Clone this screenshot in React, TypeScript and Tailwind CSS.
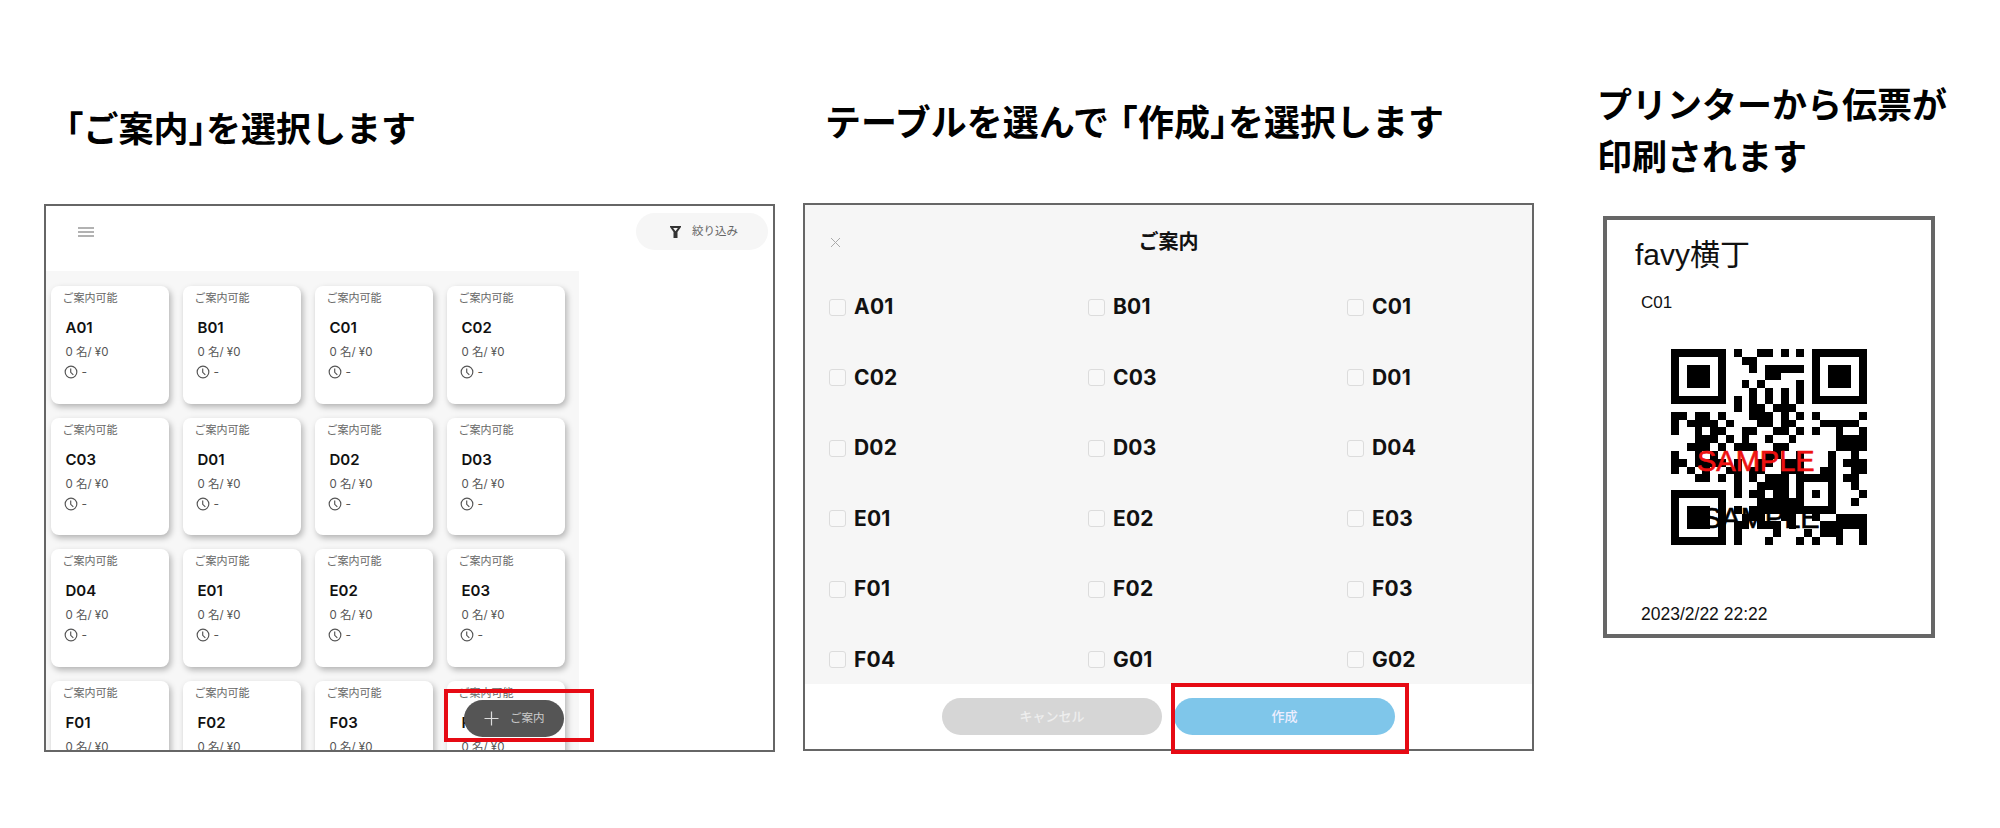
import React from "react";

const QR = [
  "1111111010011010101111111",
  "1000001001100000001000001",
  "1011101000101111101011101",
  "1011101000001100001011101",
  "1011101001010000101011101",
  "1000001000101010101000001",
  "1111111010101010101111111",
  "0000000010110111000000000",
  "1101101000111010101000001",
  "1011110100011011000111110",
  "1001011001100110101001001",
  "0001110101001001000001111",
  "0011101011100110000001111",
  "1001010000001100100010010",
  "1101111010011011100010111",
  "1010100110110011100110011",
  "0001101010101110111110110",
  "0000000010011110100010010",
  "1111111010110110101010001",
  "1000001000011111100010010",
  "1011101010111111111110000",
  "1011101001110011001001111",
  "1011101011011101000111111",
  "1000001010000100010111001",
  "1111111010001000101001001",
];

const cards = [
  "A01", "B01", "C01", "C02",
  "C03", "D01", "D02", "D03",
  "D04", "E01", "E02", "E03",
  "F01", "F02", "F03", "F04",
];

const options = [
  "A01", "B01", "C01",
  "C02", "C03", "D01",
  "D02", "D03", "D04",
  "E01", "E02", "E03",
  "F01", "F02", "F03",
  "F04", "G01", "G02",
];

function TableCard({ name }: { name: string }) {
  return (
    <div className="h-[117.5px] rounded-lg bg-white pl-[11.5px] pt-[4px] shadow-[2px_3px_6px_rgba(0,0,0,0.28)]">
      <div className="text-[11px] leading-4 text-[#666]">ご案内可能</div>
      <div className="ml-[3px] mt-[12px] text-[15px] font-semibold leading-5 text-[#111]">{name}</div>
      <div className="ml-[3px] mt-[6px] text-[11.5px] leading-4 text-[#555]">0 名/ ¥0</div>
      <div className="ml-[1px] mt-[5px] flex items-center gap-[4px] text-[12px] leading-[14px] text-[#555]">
        <svg width="14" height="14" viewBox="0 0 24 24" fill="none" stroke="#555" strokeWidth="2">
          <circle cx="12" cy="12" r="10" />
          <path d="M11.5 6v6.5l4.5 4.5" />
        </svg>
        <span>-</span>
      </div>
    </div>
  );
}

function Option({ name }: { name: string }) {
  return (
    <div className="flex h-6 items-center">
      <div className="h-[17px] w-[17px] rounded-[3px] border border-[#dcdcdc] bg-[#f8f8f8]" />
      <span className="ml-[8px] text-[21px] font-bold leading-6 tracking-[0.2px] text-[#111]">{name}</span>
    </div>
  );
}

export default function App() {
  return (
    <div className="flex h-[828px] w-[2000px] overflow-hidden bg-white [font-family:Inter,'Noto_Sans_CJK_JP',sans-serif]">
      <div className="ml-[44px] w-[731px]">
        <div className="h-[204px] pl-[22px] pt-[109px] text-[35px] font-bold leading-10 text-black">
          <span className="-ml-[0.5em]">「</span>ご案内<span className="tracking-[-0.5em]">」</span>を選択します
        </div>
        <div className="relative h-[548px] w-[731px]">
          <div className="flex h-full flex-col overflow-hidden border-2 border-[#666]">
            <div className="flex h-[65px] shrink-0 items-start justify-between pl-[32px] pr-[5px] pt-[7px]">
              <div className="flex h-[37px] items-center">
                <svg width="16" height="10" viewBox="0 0 16 10" fill="none" stroke="#666" strokeWidth="1.2">
                  <path d="M0 1h16M0 5h16M0 9h16" />
                </svg>
              </div>
              <div className="flex h-[37px] w-[132px] items-center gap-[11px] rounded-full bg-[#f6f6f6] pl-[34px]">
                <svg width="11" height="12" viewBox="0 0 11 12" fill="none" stroke="#333" strokeWidth="2" strokeLinejoin="miter">
                  <path d="M1.2 1h8.6L6.5 5.6V11h-2V5.6z" />
                </svg>
                <span className="text-[11.5px] text-[#666]">絞り込み</span>
              </div>
            </div>
            <div className="min-h-0 w-[533px] flex-1 overflow-hidden bg-[#f7f7f7] pl-[5px] pt-[15px]">
              <div className="grid grid-cols-[repeat(4,117.5px)] gap-x-[14.5px] gap-y-[14px]">
                {cards.map((c) => (
                  <TableCard key={c} name={c} />
                ))}
              </div>
            </div>
          </div>
          <div className="absolute left-[420px] top-[496px] flex h-[37px] w-[100px] items-center rounded-full bg-[#555] pl-[20px]">
            <svg width="15" height="15" viewBox="0 0 15 15" fill="none" stroke="#ddd" strokeWidth="1.2">
              <path d="M7.5 0.5v14M0.5 7.5h14" />
            </svg>
            <span className="ml-[11px] text-[11.5px] text-[#ccc]">ご案内</span>
          </div>
          <div className="absolute left-[400px] top-[485px] h-[53px] w-[150px] border-4 border-[#e60a14]" />
        </div>
      </div>

      <div className="ml-[28px] w-[731px]">
        <div className="h-[203px] whitespace-nowrap pl-[22px] pt-[103px] text-[36px] font-bold leading-10 text-black">
          テーブルを選んで<span className="-ml-[0.2em]">「</span>作成<span className="tracking-[-0.5em]">」</span>を選択します
        </div>
        <div className="relative h-[548px] w-[731px]">
          <div className="flex h-full flex-col overflow-hidden border-2 border-[#666] bg-white">
            <div className="h-[479px] shrink-0 overflow-hidden bg-[#f6f6f6]">
              <div className="relative flex h-[74px] items-center justify-center">
                <svg className="absolute left-[25px] top-[32px]" width="11" height="11" viewBox="0 0 11 11" fill="none" stroke="#aaa" strokeWidth="1">
                  <path d="M1 1l9 9M10 1l-9 9" />
                </svg>
                <span className="text-[20px] font-semibold text-[#111]">ご案内</span>
              </div>
              <div className="grid grid-cols-[259px_259px_auto] gap-y-[46.6px] pl-[24px] pt-[16px]">
                {options.map((o) => (
                  <Option key={o} name={o} />
                ))}
              </div>
            </div>
            <div className="flex justify-center gap-[12px] pt-[14px]">
              <div className="flex h-[37px] w-[220px] items-center justify-center rounded-full bg-[#d6d6d6] text-[13px] font-medium text-[#eee]">キャンセル</div>
              <div className="flex h-[37px] w-[221px] items-center justify-center rounded-full bg-[#7fc6ea] text-[13px] font-medium text-[#eef]">作成</div>
            </div>
          </div>
          <div className="absolute left-[368px] top-[480px] h-[71px] w-[238px] border-4 border-[#e60a14]" />
        </div>
      </div>

      <div className="ml-[63px] w-[360px]">
        <div className="h-[216px] whitespace-nowrap pt-[79px] text-[35px] font-bold leading-[52px] text-black">
          <div>プリンターから伝票が</div>
          <div>印刷されます</div>
        </div>
        <div className="ml-[6px] h-[422px] w-[332px] border-4 border-[#666] bg-white [font-family:'Liberation_Sans','Noto_Sans_CJK_JP',sans-serif]">
          <div className="ml-[28px] mt-[17px] text-[30px] leading-9 text-[#111]">favy横丁</div>
          <div className="ml-[34px] mt-[20px] text-[17px] leading-5 text-[#111]">C01</div>
          <div className="relative ml-[64px] mt-[36px] h-[196px] w-[196px]">
            <svg width="196" height="196" viewBox="0 0 25 25" shapeRendering="crispEdges">
              {QR.flatMap((row, y) =>
                row.split("").map((c, x) => (c === "1" ? <rect key={`${x}-${y}`} x={x} y={y} width="1" height="1" fill="#000" /> : null))
              )}
            </svg>
            <span className="absolute left-[26px] top-[96px] text-[29px] leading-8 text-[#ee1111] [-webkit-text-stroke:0.6px_#ee1111]">SAMPLE</span>
            <span className="absolute left-[31px] top-[153px] text-[29px] leading-8 text-black [-webkit-text-stroke:0.6px_#000]">SAMPLE</span>
          </div>
          <div className="ml-[34px] mt-[59px] text-[17.5px] leading-5 text-[#111]">2023/2/22 22:22</div>
        </div>
      </div>
    </div>
  );
}
